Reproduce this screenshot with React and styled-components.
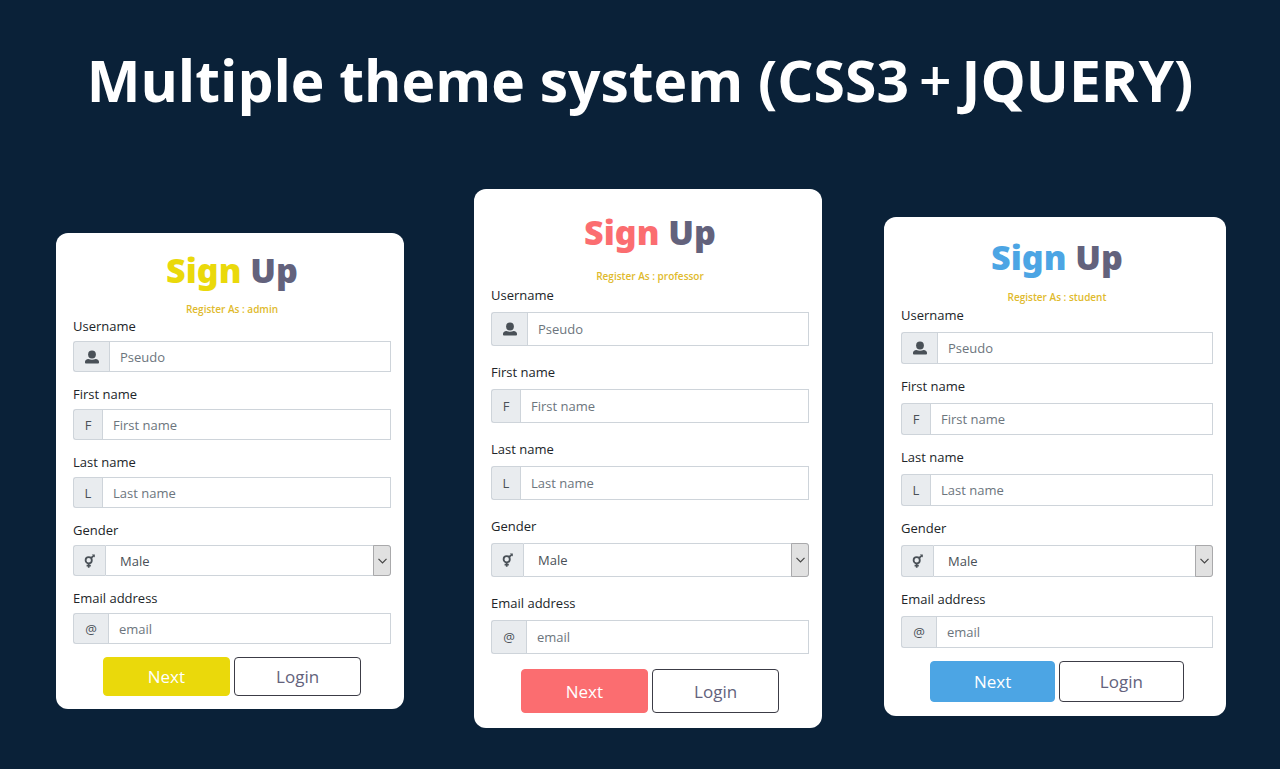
import React, { useId } from "react";
import styled, { createGlobalStyle, ThemeProvider } from "styled-components";

const GlobalStyle = createGlobalStyle`
  *, *::before, *::after { box-sizing: border-box; }
  body {
    margin: 0;
    background: #0a2138;
    color: #212529;
    font-family: "Segoe UI", "Open Sans", "Noto Sans", sans-serif;
  }
`;

const themes = [
  { role: "admin", accent: "#ead90b", lead: 44, top: 16, title: 42, note: 25, noteGap: 0, labelGap: 5, input: 31, fieldGap: 12, actions: 13, button: 39, bottom: 13 },
  { role: "professor", accent: "#fb6d70", lead: 0, top: 20, title: 46, note: 28, noteGap: 2, labelGap: 7, input: 34, fieldGap: 16, actions: 15, button: 44, bottom: 15 },
  { role: "student", accent: "#4ca5e4", lead: 28, top: 18, title: 44, note: 25, noteGap: 1, labelGap: 7, input: 32, fieldGap: 12, actions: 13, button: 41, bottom: 14 },
];

const Page = styled.div`
  min-height: 100vh;
  padding-bottom: 40px;
`;

const Banner = styled.h1`
  margin: 0;
  padding: 40px 0 69px;
  text-align: center;
  color: #fff;
  font-size: 57px;
  line-height: 80px;
  font-weight: 700;
  white-space: nowrap;
`;

const Plus = styled.span`
  margin: 0 10px;
  font-weight: 600;
`;

const Showcase = styled.main`
  display: grid;
  grid-template-columns: 348fr 70fr 348fr 62fr 342fr;
  align-items: start;
  padding: 0 54px 0 56px;

  > :nth-child(2) { grid-column: 3; }
  > :nth-child(3) { grid-column: 5; }
`;

const Card = styled.form`
  margin-top: ${({ theme }) => theme.lead}px;
  padding: ${({ theme }) => `${theme.top}px 13px ${theme.bottom}px 17px`};
  background: #fff;
  border-radius: 12px;
`;

const Title = styled.h2`
  margin: 0;
  text-align: center;
  color: #63627c;
  font-family: "Segoe UI Black", "Noto Sans", sans-serif;
  font-size: 34px;
  line-height: ${({ theme }) => theme.title}px;
  font-weight: 900;
`;

const Accent = styled.span`
  color: ${({ theme }) => theme.accent};
`;

const RoleNote = styled.p`
  display: flex;
  align-items: flex-end;
  justify-content: center;
  height: ${({ theme }) => theme.note}px;
  margin: 0 0 ${({ theme }) => theme.noteGap}px;
  color: #e0ba2c;
  font-size: 10px;
  line-height: 14px;
  font-weight: 600;
`;

const Fields = styled.div`
  display: flex;
  flex-direction: column;
  gap: ${({ theme }) => theme.fieldGap}px;
`;

const Field = styled.div`
  display: flex;
  flex-direction: column;
  gap: ${({ theme }) => theme.labelGap}px;
`;

const Label = styled.label`
  font-size: 13px;
  line-height: 20px;
`;

const InputGroup = styled.div`
  display: flex;
  height: ${({ theme }) => theme.input}px;
`;

const Addon = styled.span`
  flex: none;
  display: flex;
  align-items: center;
  justify-content: center;
  width: ${({ $width }) => $width}px;
  border: 1px solid #ced4da;
  border-right: 0;
  border-radius: 3px 0 0 3px;
  background: #e9ecef;
  color: #495057;
  font-size: 13px;
`;

const TextInput = styled.input`
  flex: 1;
  min-width: 0;
  padding: 0 10px;
  border: 1px solid #ced4da;
  border-radius: 0;
  background: #fff;
  color: #495057;
  font: inherit;
  font-size: 13px;

  &::placeholder { color: #6c757d; opacity: 1; }
`;

const SelectBox = styled.div`
  flex: 1;
  display: grid;
  grid-template-columns: 1fr 18px;
  min-width: 0;

  > * { grid-row: 1; }
`;

const Select = styled.select`
  grid-column: 1 / 3;
  appearance: none;
  padding: 0 14px;
  border: 1px solid #ced4da;
  border-radius: 0 3px 3px 0;
  background: #fff;
  color: #495057;
  font: inherit;
  font-size: 13px;
`;

const Arrow = styled.span`
  grid-column: 2;
  display: flex;
  align-items: center;
  justify-content: center;
  border: 1px solid #a9a9ab;
  border-radius: 0 3px 3px 0;
  background: #e1e1e1;
  pointer-events: none;
`;

const Actions = styled.div`
  display: flex;
  justify-content: center;
  gap: 4px;
  padding-top: ${({ theme }) => theme.actions}px;
`;

const Button = styled.button`
  width: 40%;
  height: ${({ theme }) => theme.button}px;
  padding: 0;
  border: 1px solid ${({ theme, $outline }) => ($outline ? "#3c3c46" : theme.accent)};
  border-radius: 4px;
  background: ${({ theme, $outline }) => ($outline ? "#fff" : theme.accent)};
  color: ${({ $outline }) => ($outline ? "#63627c" : "#fff")};
  font: inherit;
  font-size: 17px;
`;

const UserIcon = () => (
  <svg width="14" height="14" viewBox="0 0 14 14" fill="currentColor" aria-hidden="true">
    <ellipse cx="7" cy="4.4" rx="3.9" ry="4" />
    <path d="M3.4 8.9C1.300 9.100 0 10.200 0 11.800v.800c0 .6.5 1 1.100 1h11.800c.6 0 1.100-.4 1.100-1v-.800c0-1.600-1.300-2.700-3.400-2.900C8.400 9.900 5.600 9.900 3.400 8.900z" />
  </svg>
);

const GenderIcon = () => (
  <svg width="12" height="14" viewBox="0 0 12 14" fill="none" stroke="currentColor" aria-hidden="true">
    <circle cx="4.7" cy="6.2" r="3.1" strokeWidth="1.8" />
    <path d="M7 4 9.6 1.8M4.7 9.3V13.8M2.6 11.7H6.8" strokeWidth="1.7" />
    <path d="M7.8 0.5h3v3z" fill="currentColor" stroke="none" />
  </svg>
);

const ChevronIcon = () => (
  <svg width="9" height="6" viewBox="0 0 9 6" fill="none" stroke="#444" strokeWidth="1.2" aria-hidden="true">
    <path d="M0.5 0.8 4.5 4.8 8.5 0.8" />
  </svg>
);

function TextField({ label, addon, addonWidth, placeholder, type = "text" }) {
  const id = useId();
  return (
    <Field>
      <Label htmlFor={id}>{label}</Label>
      <InputGroup>
        <Addon $width={addonWidth}>{addon}</Addon>
        <TextInput id={id} type={type} placeholder={placeholder} />
      </InputGroup>
    </Field>
  );
}

function GenderField() {
  const id = useId();
  return (
    <Field>
      <Label htmlFor={id}>Gender</Label>
      <InputGroup>
        <Addon $width={32}><GenderIcon /></Addon>
        <SelectBox>
          <Select id={id} defaultValue="Male">
            <option>Male</option>
            <option>Female</option>
          </Select>
          <Arrow><ChevronIcon /></Arrow>
        </SelectBox>
      </InputGroup>
    </Field>
  );
}

function SignUpCard({ role }) {
  return (
    <Card>
      <Title><Accent>Sign</Accent> Up</Title>
      <RoleNote>Register As : {role}</RoleNote>
      <Fields>
        <TextField label="Username" addon={<UserIcon />} addonWidth={36} placeholder="Pseudo" />
        <TextField label="First name" addon="F" addonWidth={29} placeholder="First name" />
        <TextField label="Last name" addon="L" addonWidth={29} placeholder="Last name" />
        <GenderField />
        <TextField label="Email address" addon="@" addonWidth={35} placeholder="email" type="email" />
      </Fields>
      <Actions>
        <Button type="button">Next</Button>
        <Button type="button" $outline>Login</Button>
      </Actions>
    </Card>
  );
}

export default function App() {
  return (
    <Page>
      <GlobalStyle />
      <Banner>Multiple theme system (CSS3<Plus>+</Plus>JQUERY)</Banner>
      <Showcase>
        {themes.map((theme) => (
          <ThemeProvider key={theme.role} theme={theme}>
            <SignUpCard role={theme.role} />
          </ThemeProvider>
        ))}
      </Showcase>
    </Page>
  );
}
